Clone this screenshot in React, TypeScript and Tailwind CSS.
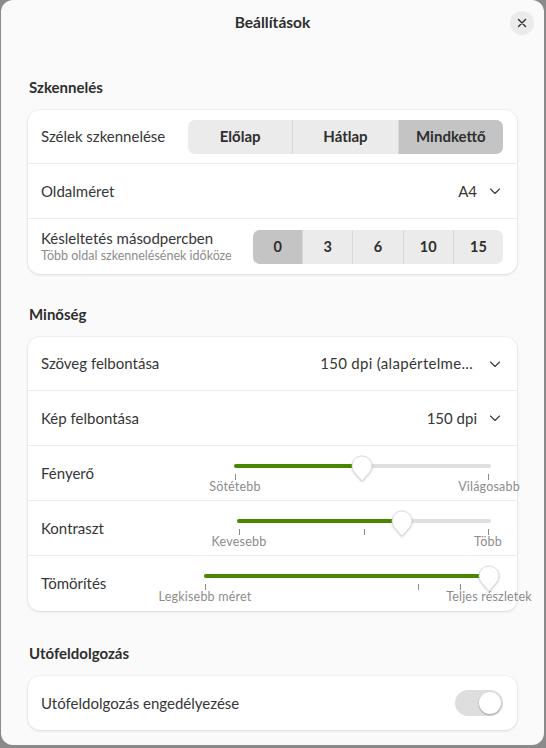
import React from "react";

const FONT = "[font-family:Lato,'Noto_Sans',sans-serif]";

const Chevron = () => (
  <svg width="16" height="16" viewBox="0 0 16 16" className="shrink-0">
    <path d="M3.5 6 L8 10.5 L12.5 6" fill="none" stroke="#3a3a3a" strokeWidth="1.1" strokeLinecap="round" strokeLinejoin="round" />
  </svg>
);

type SliderProps = {
  start: number;
  end: number;
  y: number;
  value: number;
  ticks: number[];
  tickY: number;
  labels: { x: number; text: string }[];
  labelY: number;
};

const Slider = ({ start, end, y, value, ticks, tickY, labels, labelY }: SliderProps) => (
  <div className="absolute inset-0 pointer-events-none">
    <div className="absolute h-[4px] rounded-full bg-[#e0e0e0]" style={{ left: start, width: end - start, top: y - 2 }} />
    <div className="absolute h-[4px] rounded-full bg-[#4a8700]" style={{ left: start, width: value - start, top: y - 2 }} />
    {ticks.map((t) => (
      <div key={t} className="absolute w-[1px] h-[6px] bg-[#8a8a8a]" style={{ left: t, top: tickY }} />
    ))}
    {labels.map((l) => (
      <div
        key={l.text}
        className="absolute -translate-x-1/2 whitespace-nowrap text-[12.5px] leading-[14px] text-[#8c8c8c] tracking-[0.2px]"
        style={{ left: l.x, top: labelY }}
      >
        {l.text}
      </div>
    ))}
    <svg
      className="absolute [filter:drop-shadow(0_1px_1px_rgba(0,0,0,0.18))]"
      style={{ left: value - 11, top: y - 11 }}
      width="22"
      height="28"
      viewBox="-1 -1 22 28"
    >
      <path d="M10 25 L2.93 17.07 A10 10 0 1 1 17.07 17.07 Z" fill="#ffffff" stroke="#d4d4d4" strokeWidth="0.8" />
    </svg>
  </div>
);

const Heading = ({ children, className = "" }: { children: React.ReactNode; className?: string }) => (
  <div className={`text-[15px] leading-[20px] font-bold text-[#2e2e2e] px-[1px] mb-[13px] ${className}`}>{children}</div>
);

const Card = ({ children }: { children: React.ReactNode }) => (
  <div className="bg-white rounded-[12px] shadow-[0_0_0_1px_rgba(0,0,0,0.03),0_1px_3px_rgba(0,0,0,0.10)] flex flex-col divide-y divide-[#ebebeb]">
    {children}
  </div>
);

const Row = ({ children, className = "" }: { children: React.ReactNode; className?: string }) => (
  <div className={`relative h-[55px] first:h-[54px] flex items-center pl-[13px] pr-[14px] ${className}`}>{children}</div>
);

const Label = ({ children }: { children: React.ReactNode }) => (
  <div className="text-[15px] text-[#363636] whitespace-nowrap">{children}</div>
);

export default function App() {
  const sides = ["Előlap", "Hátlap", "Mindkettő"];
  const delays = ["0", "3", "6", "10", "15"];
  return (
    <div className={`w-[546px] h-[748px] bg-[#8a8a8a] pl-[1px] pr-[2px] pb-[3px] ${FONT}`}>
      <div className="h-full bg-[#fafafa] rounded-[12px] flex flex-col overflow-hidden">
        <div className="h-[45px] shrink-0 grid grid-cols-[1fr_auto_1fr] items-center">
          <div />
          <div className="text-[15.5px] font-bold text-[#2e2e2e]">Beállítások</div>
          <div className="flex justify-end pr-[10px]">
            <div className="w-[24px] h-[24px] rounded-full bg-[#ebebeb] flex items-center justify-center">
              <svg width="10" height="10" viewBox="0 0 10 10">
                <path d="M1.5 1.5 L8.5 8.5 M8.5 1.5 L1.5 8.5" stroke="#2e2e2e" strokeWidth="1.4" strokeLinecap="round" />
              </svg>
            </div>
          </div>
        </div>

        <div className="px-[27px] pt-[32px] flex flex-col">
          <Heading>Szkennelés</Heading>
          <Card>
            <Row className="justify-between">
              <Label>Szélek szkennelése</Label>
              <div className="flex w-[315px] h-[34px] rounded-[7px] bg-[#ebebeb] overflow-hidden">
                {sides.map((s, i) => (
                  <div
                    key={s}
                    className={`flex-1 flex items-center justify-center text-[15px] font-bold text-[#2e2e2e] ${i > 0 ? "border-l border-[#d8d8d8]" : ""} ${i === 2 ? "bg-[#c4c4c4]" : ""}`}
                  >
                    {s}
                  </div>
                ))}
              </div>
            </Row>
            <Row className="justify-between">
              <Label>Oldalméret</Label>
              <div className="flex items-center gap-[10px] text-[15px] text-[#363636]">
                <span>A4</span>
                <Chevron />
              </div>
            </Row>
            <Row className="justify-between">
              <div className="flex flex-col">
                <div className="text-[15px] leading-[19px] text-[#363636]">Késleltetés másodpercben</div>
                <div className="text-[12.5px] leading-[16px] text-[#8c8c8c]">Több oldal szkennelésének időköze</div>
              </div>
              <div className="flex w-[250px] h-[34px] rounded-[7px] bg-[#ebebeb] overflow-hidden">
                {delays.map((s, i) => (
                  <div
                    key={s}
                    className={`flex-1 flex items-center justify-center text-[14.5px] font-bold text-[#2e2e2e] ${i > 0 ? "border-l border-[#d8d8d8]" : ""} ${i === 0 ? "bg-[#c4c4c4]" : ""}`}
                  >
                    {s}
                  </div>
                ))}
              </div>
            </Row>
          </Card>

          <Heading className="mt-[30px]">Minőség</Heading>
          <Card>
            <Row className="justify-between">
              <Label>Szöveg felbontása</Label>
              <div className="flex items-center gap-[14px] text-[15px] text-[#363636] tracking-[0.3px]">
                <span>150 dpi (alapértelme…</span>
                <Chevron />
              </div>
            </Row>
            <Row className="justify-between">
              <Label>Kép felbontása</Label>
              <div className="flex items-center gap-[10px] text-[15px] text-[#363636]">
                <span>150 dpi</span>
                <Chevron />
              </div>
            </Row>
            <Row>
              <Label>Fényerő</Label>
              <Slider
                start={206}
                end={463}
                y={20}
                value={334}
                ticks={[207, 460]}
                tickY={28}
                labels={[
                  { x: 207, text: "Sötétebb" },
                  { x: 461, text: "Világosabb" },
                ]}
                labelY={34}
              />
            </Row>
            <Row>
              <Label>Kontraszt</Label>
              <Slider
                start={209}
                end={463}
                y={20}
                value={374}
                ticks={[211, 336, 460]}
                tickY={28}
                labels={[
                  { x: 211, text: "Kevesebb" },
                  { x: 460, text: "Több" },
                ]}
                labelY={34}
              />
            </Row>
            <Row>
              <Label>Tömörítés</Label>
              <Slider
                start={176}
                end={462}
                y={20}
                value={461}
                ticks={[177, 390, 432]}
                tickY={28}
                labels={[
                  { x: 177, text: "Legkisebb méret" },
                  { x: 461, text: "Teljes részletek" },
                ]}
                labelY={34}
              />
            </Row>
          </Card>

          <Heading className="mt-[32px]">Utófeldolgozás</Heading>
          <Card>
            <Row className="justify-between">
              <Label>Utófeldolgozás engedélyezése</Label>
              <div className="w-[48px] h-[26px] rounded-full bg-[#dedede] flex items-center justify-end p-[2px]">
                <div className="w-[22px] h-[22px] rounded-full bg-white shadow-[0_1px_2px_rgba(0,0,0,0.3)]" />
              </div>
            </Row>
          </Card>
        </div>
      </div>
    </div>
  );
}
